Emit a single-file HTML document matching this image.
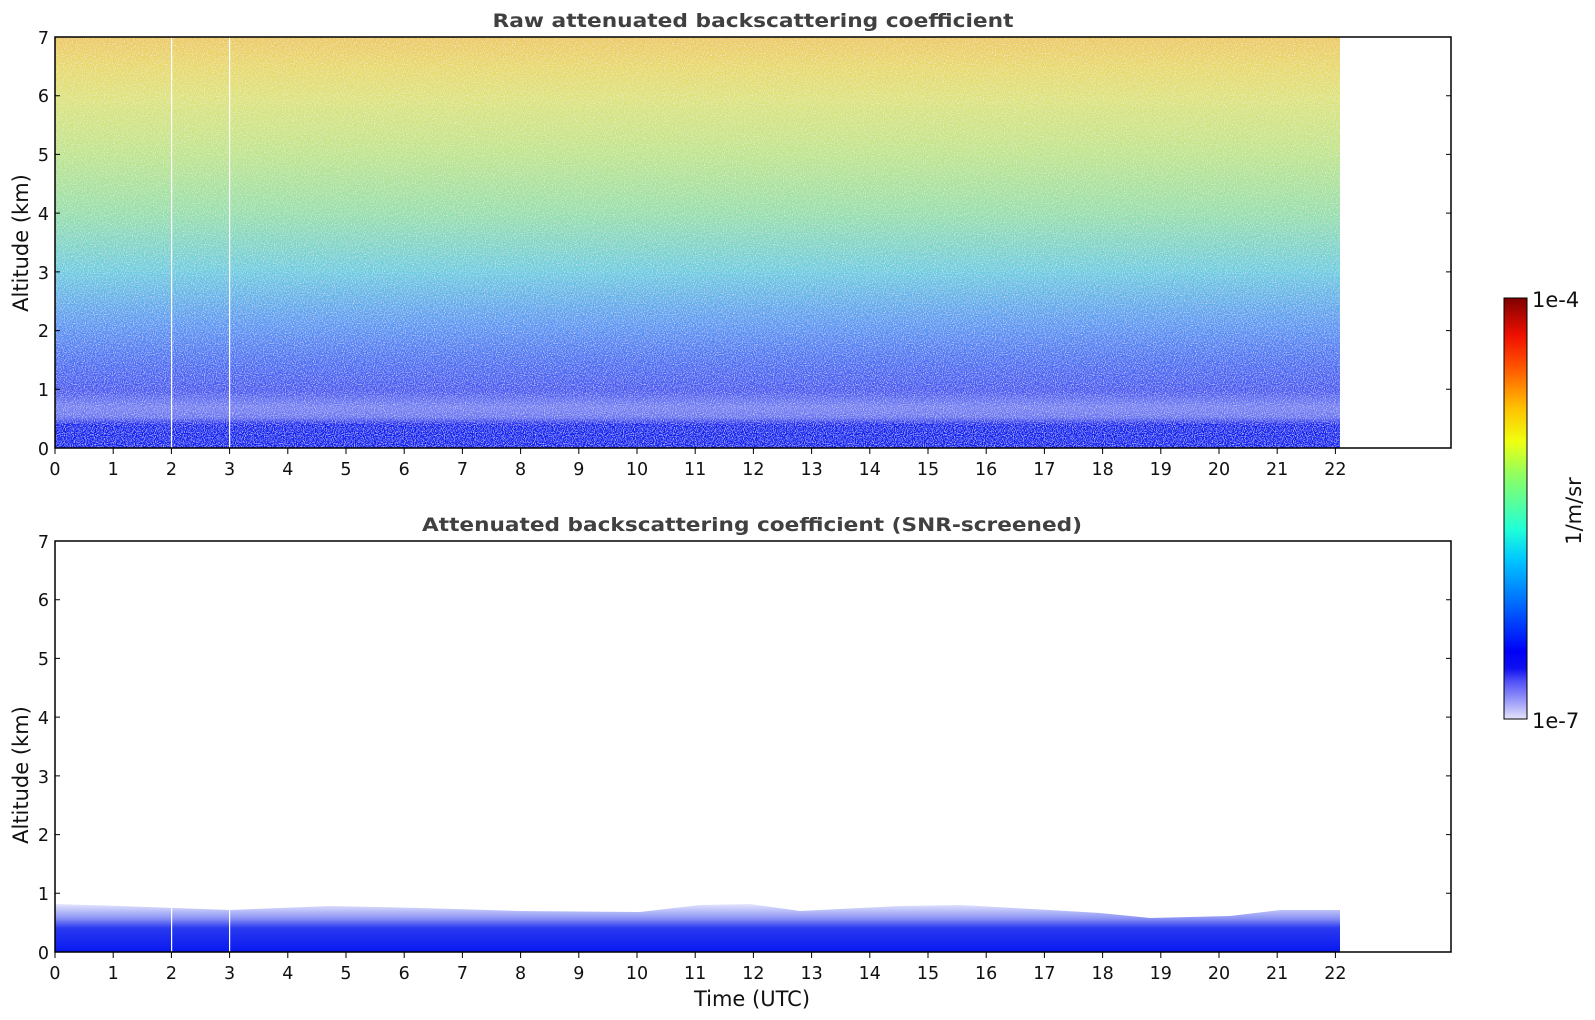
<!DOCTYPE html>
<html><head><meta charset="utf-8"><style>
html,body{margin:0;padding:0;background:#fff;}
svg{display:block;font-family:"DejaVu Sans","Liberation Sans",sans-serif;}
</style></head><body>
<svg width="1595" height="1020" viewBox="0 0 1595 1020" xmlns="http://www.w3.org/2000/svg">
<defs>
<linearGradient id="raw" x1="0" y1="0" x2="0" y2="1">
<stop offset="0" stop-color="#ecc860"/>
<stop offset="0.07" stop-color="#e8d868"/>
<stop offset="0.15" stop-color="#dde27a"/>
<stop offset="0.28" stop-color="#c0e48a"/>
<stop offset="0.43" stop-color="#96deac"/>
<stop offset="0.57" stop-color="#6ccce0"/>
<stop offset="0.70" stop-color="#5a98f2"/>
<stop offset="0.80" stop-color="#4a6cf2"/>
<stop offset="0.86" stop-color="#4658f0"/>
<stop offset="0.90" stop-color="#7480f2"/>
<stop offset="0.925" stop-color="#6a76f0"/>
<stop offset="0.945" stop-color="#1020f0"/>
<stop offset="1" stop-color="#0a22f0"/>
</linearGradient>
<linearGradient id="snr" x1="0" y1="0" x2="0" y2="1">
<stop offset="0" stop-color="#e4e6fc"/>
<stop offset="0.3" stop-color="#8a92f4"/>
<stop offset="0.5" stop-color="#2a3af0"/>
<stop offset="1" stop-color="#0818f0"/>
</linearGradient>
<linearGradient id="cb" x1="0" y1="1" x2="0" y2="0">
<stop offset="0" stop-color="#e4e4fa"/>
<stop offset="0.03" stop-color="#b0b0fa"/>
<stop offset="0.06" stop-color="#8080f8"/>
<stop offset="0.09" stop-color="#5050f8"/>
<stop offset="0.12" stop-color="#1010f0"/>
<stop offset="0.16" stop-color="#0000f8"/>
<stop offset="0.28" stop-color="#0070ff"/>
<stop offset="0.38" stop-color="#00c8ff"/>
<stop offset="0.45" stop-color="#20ffd8"/>
<stop offset="0.58" stop-color="#90ff60"/>
<stop offset="0.66" stop-color="#f0ff10"/>
<stop offset="0.74" stop-color="#ffc000"/>
<stop offset="0.84" stop-color="#ff5000"/>
<stop offset="0.91" stop-color="#f01000"/>
<stop offset="1" stop-color="#800000"/>
</linearGradient>
<filter id="noise" x="0" y="0" width="1" height="1">
<feTurbulence type="fractalNoise" baseFrequency="0.9" numOctaves="1" seed="3" result="t"/>
<feColorMatrix in="t" type="matrix" values="0 0 0 0 1  0 0 0 0 1  0 0 0 0 1  1.6 0 0 0 -0.75" result="w"/>
<feComposite in="w" in2="SourceGraphic" operator="in" result="w2"/>
<feMerge><feMergeNode in="SourceGraphic"/><feMergeNode in="w2"/></feMerge>
</filter>
</defs>

<rect x="55" y="37" width="1285" height="411" fill="url(#raw)" filter="url(#noise)"/>
<rect x="171" y="37" width="1.2" height="411" fill="#fff"/>
<rect x="229" y="37" width="1.2" height="411" fill="#fff"/>

<path d="M55,904 L120,906 L230,910 L330,906 L420,908 L520,911 L640,912 L700,905 L750,904 L800,911 L900,906 L960,905 L1050,910 L1100,913 L1150,918 L1230,916 L1280,910 L1340,910 L1340,952 L55,952 Z" fill="url(#snr)"/>
<rect x="171" y="905" width="1.2" height="47" fill="#fff"/>
<rect x="229" y="905" width="1.2" height="47" fill="#fff"/>

<rect x="55" y="37" width="1396" height="411" fill="none" stroke="#000" stroke-width="1.5"/>
<rect x="55" y="541" width="1396" height="411" fill="none" stroke="#000" stroke-width="1.5"/>

<g stroke="#000" stroke-width="1">
<path d="M55,389.3h5M55,330.6h5M55,271.9h5M55,213.1h5M55,154.4h5M55,95.7h5M1451,389.3h-5M1451,330.6h-5M1451,271.9h-5M1451,213.1h-5M1451,154.4h-5M1451,95.7h-5"/>
<path d="M55,893.3h5M55,834.6h5M55,775.9h5M55,717.1h5M55,658.4h5M55,599.7h5M1451,893.3h-5M1451,834.6h-5M1451,775.9h-5M1451,717.1h-5M1451,658.4h-5M1451,599.7h-5"/>
<path d="M55,448v6M113.2,448v6M171.4,448v6M229.6,448v6M287.8,448v6M346,448v6M404.2,448v6M462.4,448v6M520.6,448v6M578.8,448v6M637,448v6M695.2,448v6M753.4,448v6M811.6,448v6M869.8,448v6M928,448v6M986.2,448v6M1044.4,448v6M1102.6,448v6M1160.8,448v6M1219,448v6M1277.2,448v6M1335.4,448v6"/>
<path d="M55,952v6M113.2,952v6M171.4,952v6M229.6,952v6M287.8,952v6M346,952v6M404.2,952v6M462.4,952v6M520.6,952v6M578.8,952v6M637,952v6M695.2,952v6M753.4,952v6M811.6,952v6M869.8,952v6M928,952v6M986.2,952v6M1044.4,952v6M1102.6,952v6M1160.8,952v6M1219,952v6M1277.2,952v6M1335.4,952v6"/>
</g>

<g font-size="17.5" fill="#111" text-anchor="end">
<text x="49" y="455">0</text><text x="49" y="396">1</text><text x="49" y="337">2</text><text x="49" y="279">3</text><text x="49" y="220">4</text><text x="49" y="161">5</text><text x="49" y="102">6</text><text x="49" y="44">7</text>
<text x="49" y="959">0</text><text x="49" y="900">1</text><text x="49" y="841">2</text><text x="49" y="783">3</text><text x="49" y="724">4</text><text x="49" y="665">5</text><text x="49" y="606">6</text><text x="49" y="548">7</text>
</g>
<g font-size="17.5" fill="#111" text-anchor="middle">
<text x="55" y="475">0</text><text x="113.2" y="475">1</text><text x="171.4" y="475">2</text><text x="229.6" y="475">3</text><text x="287.8" y="475">4</text><text x="346" y="475">5</text><text x="404.2" y="475">6</text><text x="462.4" y="475">7</text><text x="520.6" y="475">8</text><text x="578.8" y="475">9</text><text x="637" y="475">10</text><text x="695.2" y="475">11</text><text x="753.4" y="475">12</text><text x="811.6" y="475">13</text><text x="869.8" y="475">14</text><text x="928" y="475">15</text><text x="986.2" y="475">16</text><text x="1044.4" y="475">17</text><text x="1102.6" y="475">18</text><text x="1160.8" y="475">19</text><text x="1219" y="475">20</text><text x="1277.2" y="475">21</text><text x="1335.4" y="475">22</text>
<text x="55" y="979">0</text><text x="113.2" y="979">1</text><text x="171.4" y="979">2</text><text x="229.6" y="979">3</text><text x="287.8" y="979">4</text><text x="346" y="979">5</text><text x="404.2" y="979">6</text><text x="462.4" y="979">7</text><text x="520.6" y="979">8</text><text x="578.8" y="979">9</text><text x="637" y="979">10</text><text x="695.2" y="979">11</text><text x="753.4" y="979">12</text><text x="811.6" y="979">13</text><text x="869.8" y="979">14</text><text x="928" y="979">15</text><text x="986.2" y="979">16</text><text x="1044.4" y="979">17</text><text x="1102.6" y="979">18</text><text x="1160.8" y="979">19</text><text x="1219" y="979">20</text><text x="1277.2" y="979">21</text><text x="1335.4" y="979">22</text>
</g>

<text x="753" y="27" font-size="19" font-weight="bold" fill="#404040" text-anchor="middle" textLength="521" lengthAdjust="spacingAndGlyphs">Raw attenuated backscattering coefficient</text>
<text x="752" y="531" font-size="19" font-weight="bold" fill="#404040" text-anchor="middle" textLength="660" lengthAdjust="spacingAndGlyphs">Attenuated backscattering coefficient (SNR-screened)</text>
<text x="752" y="1006" font-size="21" fill="#111" text-anchor="middle">Time (UTC)</text>
<text transform="translate(28,243) rotate(-90)" font-size="21" fill="#111" text-anchor="middle">Altitude (km)</text>
<text transform="translate(28,775) rotate(-90)" font-size="21" fill="#111" text-anchor="middle">Altitude (km)</text>

<rect x="1504" y="298" width="23" height="421" fill="url(#cb)" stroke="#000" stroke-width="1"/>
<text x="1532" y="307" font-size="21" fill="#111">1e-4</text>
<text x="1532" y="728" font-size="21" fill="#111">1e-7</text>
<text transform="translate(1581,511) rotate(-90)" font-size="21" fill="#111" text-anchor="middle">1/m/sr</text>
</svg>
</body></html>
